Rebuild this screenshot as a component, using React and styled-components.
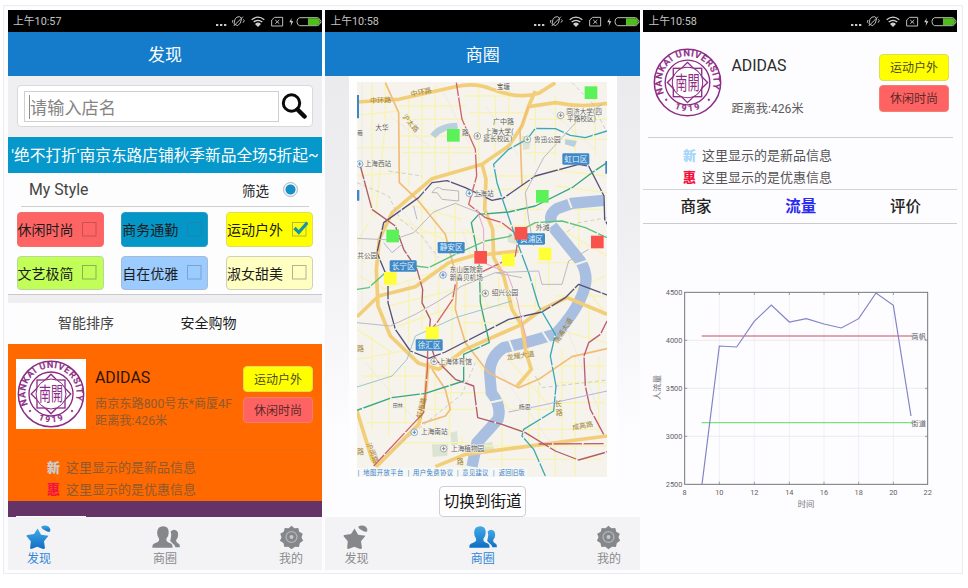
import React from "react";
import styled, { createGlobalStyle, css } from "styled-components";

const FONT = `Roboto, "Noto Sans CJK SC", sans-serif`;

const GlobalStyle = createGlobalStyle`
  * { box-sizing: border-box; }
  body { margin: 0; background: #fff; font-family: ${FONT}; color: #222; overflow: hidden; }
  svg { display: block; flex: none; }
  svg text { font-family: ${FONT}; }
`;

const Page = styled.main`
  width: 968px;
  height: 588px;
  padding: 5px 0 0 3px;
`;

const Frame = styled.div`
  width: 960px;
  height: 569px;
  padding: 4px 0 0 4px;
  border: 1px solid #ececf0;
  background: #fdfcfe;
  display: grid;
  grid-template-columns: 314px 314.6px 313.6px;
  column-gap: 3.4px;
`;

const Phone = styled.section`
  height: 560px;
  display: flex;
  flex-direction: column;
  overflow: hidden;
`;

const StatusBar = styled.header`
  height: 22px;
  flex: none;
  background: #000;
  color: #c4c4c4;
  font-size: 10.8px;
  line-height: 24px;
  padding-left: 5px;
  display: flex;
  justify-content: space-between;
  overflow: hidden;
`;

const TitleBar = styled.h1`
  margin: 0;
  height: 44px;
  flex: none;
  background: #147ccb;
  color: #fff;
  font-size: 17px;
  font-weight: 400;
  line-height: 46px;
  text-align: center;
`;

const SearchArea = styled.div`
  height: 61px;
  flex: none;
  background: #efeff2;
  padding: 9px 9px 0;
`;

const SearchBox = styled.div`
  height: 42px;
  border: 1px solid #d9d9dc;
  border-radius: 4px;
  background: #fff;
  padding: 5px 5px 0 6px;
  display: flex;
  justify-content: space-between;
`;

const SearchField = styled.div`
  width: 255px;
  height: 31px;
  border: 1px solid #cfcfd2;
  padding: 3px 4px;
  display: flex;
  color: #858585;
  font-size: 17.2px;
  line-height: 26px;
`;

const Caret = styled.span`
  width: 1px;
  height: 24px;
  background: #8d8d8d;
`;

const Banner = styled.div`
  height: 35.5px;
  flex: none;
  background: #0698cb;
  color: #fff;
  font-size: 15.7px;
  line-height: 37px;
  text-align: center;
  white-space: nowrap;
`;

const StyleCard = styled.div`
  height: 122.5px;
  flex: none;
  background: #fdfdfe;
  padding: 0 9px 0 8.5px;
  border-bottom: 1px solid #c9c9cb;
`;

const StyleHeader = styled.div`
  height: 34px;
  margin: 0 4px 5.5px 4.5px;
  padding: 1px 11px 0 8px;
  border-bottom: 1px solid #d0d0d2;
  display: flex;
  align-items: center;
  font-size: 15.8px;
  color: #444;
`;

const FilterLabel = styled.span`
  margin-left: auto;
  margin-right: 14px;
  font-size: 13.5px;
  color: #222;
`;

const Radio = styled.span`
  width: 15px;
  height: 15px;
  border-radius: 50%;
  border: 1px solid #aeb6ba;
  background: radial-gradient(circle, #1590c8 0 4.6px, #f1f4f5 5.4px);
`;

const ChipGrid = styled.div`
  display: grid;
  grid-template-columns: repeat(3, 87px);
  justify-content: space-between;
  row-gap: 9px;
`;

const Chip = styled.div`
  height: 34.5px;
  border-radius: 4px;
  border: 1px solid ${(p) => p.$edge};
  background: ${(p) => p.$color};
  display: flex;
  align-items: center;
  justify-content: space-between;
  padding: 0 4.5px 0 0;
  font-size: 14px;
  color: #1c1c1c;
  white-space: nowrap;
`;

const SortBar = styled.div`
  height: 48.5px;
  flex: none;
  border-top: 8px solid #efeff2;
  background: #fdfdfe;
  display: flex;
  padding-left: 50px;
  gap: 66.5px;
  font-size: 14px;
  line-height: 41px;
`;

const SortItem = styled.span`
  color: ${(p) => (p.$strong ? "#1b1b1b" : "#444")};
`;

const ShopItem = styled.article`
  height: 157.5px;
  flex: none;
  background: #ff6900;
  padding: 15.5px 9px 0 8px;
`;

const ShopTop = styled.div`
  display: flex;
  height: 91px;
  border-bottom: 1px solid #ec6a12;
`;

const LogoTile = styled.div`
  width: 70px;
  height: 70px;
  background: #fff;
  flex: none;
  padding: 1px;
`;

const ShopText = styled.div`
  padding-left: 9px;
  flex: 1;
  font-size: 12.2px;
  line-height: 17.5px;
  color: ${(p) => p.$color};
  white-space: nowrap;
`;

const ShopName = styled.div`
  font-size: 15.9px;
  line-height: 18px;
  color: ${(p) => p.$color};
  padding-top: ${(p) => p.$top}px;
  margin-bottom: ${(p) => p.$gap}px;
`;

const Tags = styled.div`
  padding-top: ${(p) => p.$top}px;
  display: flex;
  flex-direction: column;
  gap: 4.5px;
`;

const Tag = styled.span`
  width: 70px;
  height: 26.5px;
  border-radius: 4px;
  border: 1px solid ${(p) => (p.$hot ? "#f08070" : "#dede50")};
  background: ${(p) => (p.$hot ? "#ff6262" : "#ffff00")};
  color: ${(p) => (p.$hot ? "#5a2a2a" : "#4a4a20")};
  font-size: 12px;
  line-height: 26px;
  text-align: center;
`;

const InfoList = styled.div`
  padding: ${(p) => p.$pad};
  font-size: 13px;
  line-height: 22px;
  color: ${(p) => p.$color};
`;

const InfoRow = styled.div`
  display: flex;
  gap: 6px;
`;

const Mark = styled.b`
  font-size: 13px;
  font-weight: 900;
  color: ${(p) => p.$color};
`;

const NextItem = styled.div`
  height: 16px;
  flex: none;
  background: #663366;
  padding: 15px 0 0 8px;
`;

const NextLogo = styled.div`
  width: 70px;
  height: 1px;
  background: #fff;
`;

const Nav = styled.nav`
  margin-bottom: auto;
  height: 52.5px;
  flex: none;
  background: #f3f3f5;
  display: flex;
  justify-content: space-between;
  padding: 6.5px 15px 0;
`;

const NavItem = styled.div`
  width: 32px;
  display: flex;
  flex-direction: column;
  align-items: center;
  gap: 1px;
  font-size: 12px;
  line-height: 16px;
  white-space: nowrap;
  color: ${(p) => (p.$active ? "#2f86d6" : "#8a8a8c")};
`;

const MapArea = styled.div`
  height: 441px;
  flex: none;
  background: linear-gradient(#ebebee, #efeff1 35%, #fdfcfe 82%);
  display: flex;
  flex-direction: column;
  align-items: center;
`;

const MapFrame = styled.div`
  width: 268px;
  height: 404px;
  background: #fefefe;
  padding: 6px 10px 0 8px;
`;

const SwitchButton = styled.div`
  width: 87px;
  height: 31px;
  margin-top: 6px;
  border: 1px solid #cfcfd1;
  border-radius: 4px;
  background: #fff;
  color: #151515;
  font-size: 15.6px;
  line-height: 30px;
  text-align: center;
  white-space: nowrap;
`;

const DetailTop = styled.div`
  margin: 0 3.5px 0 5px;
  height: 105.5px;
  flex: none;
  border-bottom: 1px solid #cdcdcf;
  padding: 16px 4.5px 0 5px;
  display: flex;
`;

const Tabs = styled.div`
  height: 35px;
  flex: none;
  border-top: 1px solid #d3d3d5;
  border-bottom: 1px solid #cbcbcd;
  display: flex;
  justify-content: space-between;
  padding: 0 36px 0 37px;
  font-size: 15.5px;
  line-height: 35px;
`;

const Tab = styled.span`
  color: #222;
  font-weight: 500;
  ${(p) => p.$active && css`color: #2a2af4; font-weight: 700;`}
`;

const ChartArea = styled.div`
  padding-top: 46px;
`;

function StatusIcons() {
  return (
    <svg width="108.3" height="22.7" viewBox="630 30 325 68" fill="none" stroke="#bdbdbd" strokeWidth="3">
      <g fill="#c8c8c8" stroke="none">
        <rect x="636" y="72" width="7" height="6" />
        <rect x="648" y="72" width="7" height="6" />
        <rect x="660" y="72" width="7" height="6" />
      </g>
      <path d="M690 72l3-14q4-9 14-8l6 5-4 14-8 8zM687 60l-2 8M718 58l3 4-4 6M717 50l-28 28" />
      <g stroke="#d2d2d2" strokeWidth="4">
        <path d="M743 59q19-15 38 0M749 66q13-10 26 0" />
        <path d="M756 72q6-5 12 0l-6 6z" fill="#d2d2d2" />
      </g>
      <path d="M803 60l9-8h24v26h-33zM814 60l12 11M826 60l-12 11" />
      <path d="M863 54l-7 13h6l-2 11 8-14h-6z" fill="#ddd" stroke="none" />
      <path d="M887 53h53q6 0 6 6v0q5 0 5 6t-5 6q0 6-6 6h-53q-8-2-8-12t8-12z" stroke="#b8c4b0" />
      <path d="M912 55h28q8 2 8 10t-8 10h-28z" fill="#4fbd1b" stroke="none" />
    </svg>
  );
}

function Status({ time }) {
  return (
    <StatusBar>
      <span>上午{time}</span>
      <StatusIcons />
    </StatusBar>
  );
}

function SearchIcon() {
  return (
    <svg width="26" height="29" viewBox="0 -1 26 29" fill="none" stroke="#0a0a0a">
      <circle cx="10.5" cy="11" r="8.200" strokeWidth="3" />
      <path d="M16.5 17.5l7 7" strokeWidth="4.500" strokeLinecap="round" />
    </svg>
  );
}

function Check({ checked, line }) {
  return (
    <svg width="17" height="17" viewBox="0 0 17 17" fill="none">
      <rect x="1.5" y="1.5" width="13.5" height="13.5" stroke={line} strokeWidth="1" />
      {checked && <path d="M3.5 7l4.300 4.300L16.500 1.500" stroke="#1596a8" strokeWidth="3.200" />}
    </svg>
  );
}

function Seal({ id, size }) {
  return (
    <svg width={size} height={size} viewBox="0 0 204 204" fill="none" stroke="#8c2c86">
      <defs>
        <path id={`${id}-top`} d="M33.500 136A77 77 0 1 1 170.500 136" />
        <path id={`${id}-low`} d="M55 173A87 87 0 0 0 149 173" />
      </defs>
      <circle cx="102" cy="102" r="98" strokeWidth="4.500" />
      <circle cx="102" cy="102" r="66" strokeWidth="4" />
      <g strokeWidth="4">
        <rect x="60" y="60" width="84" height="84" />
        <rect x="60" y="60" width="84" height="84" transform="rotate(45 102 102)" />
      </g>
      <circle cx="102" cy="102" r="45" fill="#fff" strokeWidth="3" />
      <g fill="#8c2c86" stroke="#8c2c86" strokeWidth="0.8">
        <text fontSize="27" fontWeight="500">
          <textPath href={`#${id}-top`} startOffset="2" textLength="296">NANKAI UNIVERSITY</textPath>
        </text>
        <text fontSize="25" fontWeight="500">
          <textPath href={`#${id}-low`} startOffset="10" textLength="78">1919</textPath>
        </text>
        <text x="66" y="0" fontSize="36" fontWeight="400" stroke="none" transform="translate(0 123) scale(1 1.600)">南開</text>
        <circle cx="39" cy="153" r="3" />
        <circle cx="165" cy="153" r="3" />
      </g>
    </svg>
  );
}

function NavIcon({ kind, active }) {
  const fill = active ? `url(#blue-${kind})` : "#85878a";
  return (
    <svg width="29" height="26" viewBox="0 0 90 78" fill={fill}>
      <defs>
        <linearGradient id={`blue-${kind}`} x1="0" y1="0" x2="0" y2="1">
          <stop offset="0" stopColor="#43a9e6" />
          <stop offset="1" stopColor="#0f6fc4" />
        </linearGradient>
      </defs>
      {kind === "star" && (
        <>
          <path d="M39 13l11 19 23 3-14 17 3 22q-3 3-6 2l-18-7-18 7q-4 0-4-4l2-20L5 37q-1-4 3-4l20-3z" />
          <path d="M50 7q12-7 24 0 6 5 4 15-11 2-15-3-9-2-13-12z" />
        </>
      )}
      {kind === "people" && (
        <>
          <path d="M38 6q17 0 17 19 0 12-7 19v7q3 5 14 8 6 3 5 13H4q-1-10 6-13 12-3 15-8v-7q-6-7-6-19Q20 6 38 6z" />
          <path d="M61 22q6-7 14-5 11 4 9 18-1 9-6 13-1 7 10 13l2 10H76q-3-8-8-11l-7-7q-3-4 0-8 4-11 0-23z" />
        </>
      )}
      {kind === "gear" && (
        <>
          <path d="M45 4l9 8 12-1 3 12 11 6-4 11 5 11-10 7-3 12-12-1-11 8-10-8-12 1-3-12-11-7 5-11-4-11 11-6 3-12 12 1z" />
          <circle cx="45" cy="39" r="17" fill="none" stroke="#b4b5b8" strokeWidth="4" />
          <circle cx="45" cy="39" r="6" fill="#c8c9cc" />
        </>
      )}
    </svg>
  );
}

function BottomNav({ active }) {
  const items = [["star", "发现"], ["people", "商圈"], ["gear", "我的"]];
  return (
    <Nav>
      {items.map(([kind, label]) => (
        <NavItem key={kind} $active={kind === active}>
          <NavIcon kind={kind} active={kind === active} />
          <span>{label}</span>
        </NavItem>
      ))}
    </Nav>
  );
}

const minorRoads = [
  "M105 118L230 105M150 20V420M105 215H460M105 300L240 290M190 20V150L160 420M260 60V330M300 40V320M340 30V300M230 90H430M240 130H430M235 180H460M240 230H460M380 150V290",
  "M430 60H600M440 110H620M470 20V260M520 60V240M560 40V200M640 90V260M700 60V240M760 90V250M620 130H855M640 190H855M500 300H640M500 340H620M610 230H700M820 20V240",
  "M210 420L430 520M240 380L420 430M270 470H450M300 360V560M340 400V590M400 380V520M430 460L560 560M540 400H660M520 450H640M610 300V460M700 450L855 540M640 560H760M680 520V640M720 400H840M770 400V520",
  "M180 640L420 560M200 690L400 640M230 750L400 690M260 620V800M300 640V760M350 600V820M390 640V840M430 600V820M480 620V760M530 600V700M560 640L620 800M420 690H660M420 740H600M640 600V700M700 660H850M800 680V820",
  "M105 760L210 830M105 850L270 820M120 900H300M150 780V1060M200 830V1080M250 870V1040M130 1040H280M340 880V1060M390 900L380 1080M300 1000H460M340 950H500M240 1100H440M460 850L560 1000",
  "M560 850L700 1010M620 800V1100M650 900V1120M720 820V1110M760 840V1090M830 840V1070M560 1000H700M570 1060H840M700 870H850M700 920H850M710 980H850M480 1110H860M500 1150H840M700 1110V1200M760 1110V1200M540 1030V1200M420 1080V1180",
  "M140 440L105 500M130 560L105 540M110 600L190 640M680 280L850 300M700 330L855 350M850 600L760 640M780 620L855 720M700 760L855 800",
];

const highways = [
  "M105 78L230 70L400 32Q460 18 510 40Q590 70 650 52L700 20M620 92L700 80Q780 96 855 82M640 45L620 90L600 150L560 210L480 265L330 308L210 410L172 490L163 580L168 690L205 780L290 862L350 880L430 820L600 745L660 700L735 665L855 715",
  "M480 265L492 310L488 400L512 460L515 545L545 600L570 700L600 750L612 830L628 880L585 930",
  "M105 722L170 660L280 632L380 560L450 540L590 525",
  "M105 1005L150 1150L165 1170L290 1045L310 960L318 860M340 1172L430 1135L640 1108L855 1080",
];

const orangeRoads = [
  "M190 20L230 110L232 320L285 370L370 475L405 610L400 700L430 800L500 890L590 935L650 910L750 842L855 818",
  "M620 90L594 160L600 330",
  "M330 880L370 940L385 1000L370 1020L300 1042",
];

const metro = [
  ["#55507a", "M198 630L198 680L220 760L265 825L320 847L370 828L560 730L660 708L730 665L770 625L855 657"],
  ["#55507a", "M190 590L165 530L185 440L290 365L330 320L375 314L430 335L510 373L545 366L640 300L770 265L800 270L846 360L848 430L856 445"],
  ["#d0636b", "M403 20L420 130L460 220L464 300L440 385L490 425L540 440L590 480L580 540L475 590M400 625L392 670L345 740L318 770L316 880L305 1010L155 1170"],
  ["#b05b68", "M115 270L150 400L220 450L245 520L285 580L302 640L300 680L325 730L320 790L340 850L400 910L455 930L467 1025L540 1045L610 1070L700 1125L770 1152L855 1128"],
  ["#bd5a7c", "M855 735L835 775L800 800L786 840L790 930L805 1000L845 1075M650 1104L845 1103"],
  ["#3aa9b6", "M855 165L790 185L745 178L700 158L640 157L615 190L560 220L515 265L525 320L545 380L590 510L620 590L650 690L700 775L685 840L702 930L695 1005L605 1060L600 1080L635 1120L670 1200"],
  ["#3aa585", "M855 260L810 290L750 335L640 390L560 408L470 415L448 440L460 500L472 570L475 680L502 800L425 835L425 915L310 952L210 965L105 1003"],
  ["#5dc279", "M105 640L140 635L190 590M280 570L320 575L400 535L490 495L560 482L640 440L720 435L790 455L855 485"],
  ["#9cc6cb", "M105 933L210 900L255 850L280 780L400 725L570 675"],
  ["#bdbac2", "M105 487L210 492L275 470L335 408L400 382L470 410M840 85L770 130L720 185L665 245L610 350L620 430L635 510M105 740L205 750L280 715L350 675L420 630L520 590L600 605M520 590L650 585L660 625L720 625L740 555L800 520"],
  ["#e9a4c9", "M465 400L485 460L485 560L555 590L585 670L600 740L620 810"],
  ["#b4b4e0", "M560 1008L650 990L855 945M185 500L210 530L240 505M275 390L285 430"],
];

const dashes = "M750 20L810 80L850 160M105 320L200 360L235 430L300 480L350 545M180 1145L420 955L460 860M640 900L660 935L855 912M720 480L770 440L855 425M200 285L300 300";

const districts = [
  [721, 232, "虹口区"], [588, 472, "黄浦区"], [347, 498, "静安区"], [203, 553, "长宁区"], [281, 790, "徐汇区"],
];

const placeNames = [
  [524, 38, "宝塘", 20], [160, 162, "大华", 20], [105, 176, "巷", 18], [420, 176, "路", 20], [513, 145, "广中路", 21],
  [488, 173, "上海大学(", 20], [484, 196, "延长校区)", 20], [733, 113, "同济大学(四", 20], [735, 135, "平路校区)", 20],
  [636, 198, "鲁迅公园", 20], [128, 270, "上海西站", 20], [455, 360, "上海站", 20], [106, 545, "共公园", 20],
  [641, 461, "外滩", 21], [383, 589, "东山医院新", 20], [383, 612, "新喜贝机场", 20], [509, 657, "绍兴公园", 20],
  [350, 864, "上海体育馆", 20], [297, 1075, "上海南站", 20], [387, 1124, "上海植物园", 20], [212, 992, "田林", 15], [590, 998, "杨思", 18],
];

const roadNames = [
  [145, 82, "中环路", -3], [268, 62, "中环路", -12], [240, 122, "沪太路", 50], [555, 852, "龙耀大道", -8],
  [708, 803, "南浦大道", -58], [698, 990, "长", 0], [701, 1018, "路", 0], [752, 1062, "成高路", -10], [133, 1104, "沪闵路", 68], [298, 1028, "虹梅路", -76],
  [105, 826, "路", 0], [105, 1134, "路", 0], [404, 1165, "路", 0],
];

const pins = [
  [788, 31, "#5bf158"], [375, 159, "#5bf158"], [642, 342, "#5bf158"], [193, 461, "#5bf158"],
  [578, 453, "#f9514c"], [807, 479, "#f9514c"], [457, 525, "#f9514c"],
  [540, 533, "#ffff38"], [650, 515, "#ffff38"], [186, 588, "#ffff38"], [311, 752, "#ffff38"],
];

const stations = [
  [113, 264, "#5a90bd"], [442, 352, "#5a90bd"], [277, 1069, "#5a90bd"], [363, 597, "#4c7fc4"], [490, 652, "#888"],
  [716, 118, "#888"], [466, 180, "#888"], [616, 190, "#7fa08b"], [365, 1118, "#888"], [336, 856, "#888"],
];

function CityMap() {
  return (
    <svg width="250" height="395" viewBox="105 18 750 1185" fill="none">
      <rect x="105" y="18" width="750" height="1185" fill="#f5f3ec" />
      <g fill="#dbe3d2">
        <path d="M600 180l28 4-6 34-18 4zM560 470l30 10-10 25-24-8zM330 1105h48l-2 35-44 2zM385 1070l20-5 4 40-20 4zM430 1110l80-12 6 20-80 12z" />
      </g>
      <g stroke="#f7f3b4" strokeWidth="4">{minorRoads.map((d) => <path key={d} d={d} />)}</g>
      <g stroke="#e8e7e4" strokeWidth="2"><path d="M120 20V720M205 120L320 210M360 40L440 200M490 90L590 240M680 100L820 220M240 400L380 600M420 460L500 700M130 860L320 1080M500 840L700 1120M720 720L830 1000" /></g>
      <path d="M325 175Q350 140 405 140L408 158Q365 158 340 186zM730 190l35 5-8 18-28-8z" fill="#b9cfdb" />
      <g stroke="#a9bfe2">
        <path d="M845 373L750 382L705 398Q680 415 688 440" strokeWidth="34" />
        <path d="M690 450L735 505L775 555Q800 595 788 635Q770 700 700 775L610 800L545 815Q505 840 503 890L508 950Q540 990 528 1030L465 1100L450 1172" strokeWidth="34" />
      </g>
      <path d="M735 360l14 36M560 790l14 36M494 982l46-10M756 567l42-14M662 768l22 34" stroke="#f4f3ea" strokeWidth="6" />
      <g stroke="#f3ce78" strokeWidth="11" strokeLinejoin="round">{highways.map((d) => <path key={d} d={d} />)}</g>
      <g stroke="#f1bd76" strokeWidth="5" strokeLinejoin="round">{orangeRoads.map((d) => <path key={d} d={d} />)}</g>
      <path d={dashes} stroke="#bdbcc0" strokeWidth="2" strokeDasharray="12 8" />
      <path d="M330 350q15-25 30-10l50 5v30l-50-5-15-20z" stroke="#bab7bd" strokeWidth="3" />
      <g strokeLinejoin="round">
        {metro.map(([color, d], i) => <path key={i} d={d} stroke={color} strokeWidth={i < 8 ? 4 : 3} />)}
        {metro.slice(0, 8).map(([, d], i) => <path key={i} d={d} stroke="#fbfaf4" strokeWidth="4.500" strokeDasharray="5 85" strokeDashoffset="-40" />)}
      </g>
      <path d="M105 57h6v70h-6zM105 342h7v32h-7zM850 255h5v38h-5z" fill="#3f86c9" />
      {stations.map(([x, y, color]) => (
        <g key={`${x}-${y}`}>
          <circle cx={x} cy={y} r="10" fill="#f3f5f4" stroke={color} strokeWidth="2" />
          <path d={`M${x} ${y - 6}V${y + 5}M${x - 5} ${y}H${x + 5}`} stroke={color} strokeWidth="3" />
        </g>
      ))}
      {placeNames.map(([x, y, name, size]) => (
        <text key={`${name}-${y}`} x={x} y={y} fontSize={size} fill="#5f5f5f" stroke="#f8f7f0" strokeWidth="3" paintOrder="stroke">{name}</text>
      ))}
      {roadNames.map(([x, y, name, turn]) => (
        <text key={`${x}-${y}`} transform={`translate(${x} ${y}) rotate(${turn})`} fontSize="21" fill="#a08132">{name}</text>
      ))}
      {districts.map(([x, y, name]) => (
        <g key={name}>
          <rect x={x} y={y} width="81" height="34" rx="4" fill="#3f89c7" />
          <text x={x + 6} y={y + 25} fontSize="23" fill="#e4f2fd">{name}</text>
        </g>
      ))}
      {pins.map(([x, y, color]) => <rect key={`${x}-${y}`} x={x} y={y} width="38" height="38" fill={color} />)}
      <rect x="105" y="1175" width="510" height="28" fill="#f6f8f8" />
      <g fontSize="19" fill="#3a80c2">
        <text x="107" y="1198">|</text>
        <text x="124" y="1198" textLength="120">地图开放平台</text>
        <text x="257" y="1198">|</text>
        <text x="273" y="1198" textLength="120">用户免费协议</text>
        <text x="405" y="1198">|</text>
        <text x="421" y="1198" textLength="78">意见建议</text>
        <text x="513" y="1198">|</text>
        <text x="530" y="1198" textLength="78">返回旧版</text>
      </g>
    </svg>
  );
}

function FlowChart() {
  const xs = [[135, 8], [239, 10], [344, 12], [449, 14], [553, 16], [657, 18], [761, 20], [864, 22]];
  const ys = [[67, 4500], [211, 4000], [355, 3500], [499, 3000], [643, 2500]];
  return (
    <svg width="300" height="250" viewBox="10 0 900 750" fill="none">
      <g strokeWidth="2">
        {xs.slice(1, 7).map(([x]) => <path key={x} d={`M${x} 67V643`} stroke="#ebe8f0" />)}
        {ys.slice(1, 4).map(([y]) => <path key={y} d={`M135 ${y}H864`} stroke="#e4e2e8" />)}
      </g>
      <rect x="135" y="67" width="729" height="576" stroke="#77777b" strokeWidth="3" />
      <g stroke="#77777b" strokeWidth="2">
        {xs.slice(1, 7).map(([x]) => <path key={x} d={`M${x} 67v8M${x} 643v-8`} />)}
        {ys.slice(1, 4).map(([y]) => <path key={y} d={`M135 ${y}h8M864 ${y}h-8`} />)}
      </g>
      <path d="M186 198H818" stroke="#dc8494" strokeWidth="4" />
      <path d="M186 458H818" stroke="#7ddf83" strokeWidth="4" />
      <path d="M187 643L239 228L291 231L343 155L395 105L449 156L500 146L553 162L605 174L657 146L709 69L761 106L814 438" stroke="#8183c6" strokeWidth="3.500" />
      <g fill="#626266" fontSize="22">
        {xs.map(([x, label]) => <text key={x} x={x} y="676" textAnchor="middle">{label}</text>)}
        {ys.map(([y, label]) => <text key={y} x="128" y={y + 9} textAnchor="end">{label}</text>)}
        <text x="815" y="208">商帆</text>
        <text x="815" y="468">街道</text>
        <text x="499" y="711" fontSize="25" textAnchor="middle" fill="#77777b">时间</text>
        <text transform="translate(62 390) rotate(-90)" fontSize="25" fill="#77777b">人流量</text>
      </g>
    </svg>
  );
}

function Promotions({ color, pad, freshColor }) {
  return (
    <InfoList $color={color} $pad={pad}>
      <InfoRow><Mark $color={freshColor}>新</Mark>这里显示的是新品信息</InfoRow>
      <InfoRow><Mark $color="#f5123c">惠</Mark>这里显示的是优惠信息</InfoRow>
    </InfoList>
  );
}

const chips = [
  { label: "休闲时尚", color: "#ff6464", edge: "#f07070", line: "#c45252" },
  { label: "商务通勤", color: "#0596c8", edge: "#2b9cc4", line: "#1b86b0" },
  { label: "运动户外", color: "#ffff00", edge: "#dede60", line: "#b5b540", checked: true },
  { label: "文艺极简", color: "#c1ff58", edge: "#b8d89a", line: "#8fae55" },
  { label: "自在优雅", color: "#9bcbff", edge: "#a3bdd8", line: "#7fa3c8" },
  { label: "淑女甜美", color: "#ffffc2", edge: "#d0d0b8", line: "#b2b295" },
];

export default function App() {
  return (
    <Page>
      <GlobalStyle />
      <Frame>
        <Phone>
          <Status time="10:57" />
          <TitleBar>发现</TitleBar>
          <SearchArea>
            <SearchBox>
              <SearchField><Caret />请输入店名</SearchField>
              <SearchIcon />
            </SearchBox>
          </SearchArea>
          <Banner>'绝不打折'南京东路店铺秋季新品全场5折起~</Banner>
          <StyleCard>
            <StyleHeader>
              My Style
              <FilterLabel>筛选</FilterLabel>
              <Radio />
            </StyleHeader>
            <ChipGrid>
              {chips.map((c) => (
                <Chip key={c.label} $color={c.color} $edge={c.edge}>
                  {c.label}
                  <Check checked={c.checked} line={c.line} />
                </Chip>
              ))}
            </ChipGrid>
          </StyleCard>
          <SortBar>
            <SortItem>智能排序</SortItem>
            <SortItem $strong>安全购物</SortItem>
          </SortBar>
          <ShopItem>
            <ShopTop>
              <LogoTile><Seal id="list-seal" size={68} /></LogoTile>
              <ShopText $color="#8e5a30">
                <ShopName $color="#2b1608" $top={10} $gap={8.5}>ADIDAS</ShopName>
                <div>南京东路800号东*商厦4F</div>
                <div>距离我:426米</div>
              </ShopText>
              <Tags $top={6.5}><Tag>运动户外</Tag><Tag $hot>休闲时尚</Tag></Tags>
            </ShopTop>
            <Promotions color="#8e5a30" pad="7px 0 0 31px" freshColor="#c8d0d8" />
          </ShopItem>
          <NextItem><NextLogo /></NextItem>
          <BottomNav active="star" />
        </Phone>

        <Phone>
          <Status time="10:58" />
          <TitleBar>商圈</TitleBar>
          <MapArea>
            <MapFrame><CityMap /></MapFrame>
            <SwitchButton>切换到街道</SwitchButton>
          </MapArea>
          <BottomNav active="people" />
        </Phone>

        <Phone>
          <Status time="10:58" />
          <DetailTop>
            <Seal id="detail-seal" size={69} />
            <ShopText $color="#5e5e60">
              <ShopName $color="#2a2a2c" $top={9} $gap={25.5}>ADIDAS</ShopName>
              <div>距离我:426米</div>
            </ShopText>
            <Tags $top={6}><Tag>运动户外</Tag><Tag $hot>休闲时尚</Tag></Tags>
          </DetailTop>
          <Promotions color="#555557" pad="7px 0 0 39.5px" freshColor="#a5d5fb" />
          <Tabs>
            <Tab>商家</Tab>
            <Tab $active>流量</Tab>
            <Tab>评价</Tab>
          </Tabs>
          <ChartArea>
            <FlowChart />
          </ChartArea>
        </Phone>
      </Frame>
    </Page>
  );
}
